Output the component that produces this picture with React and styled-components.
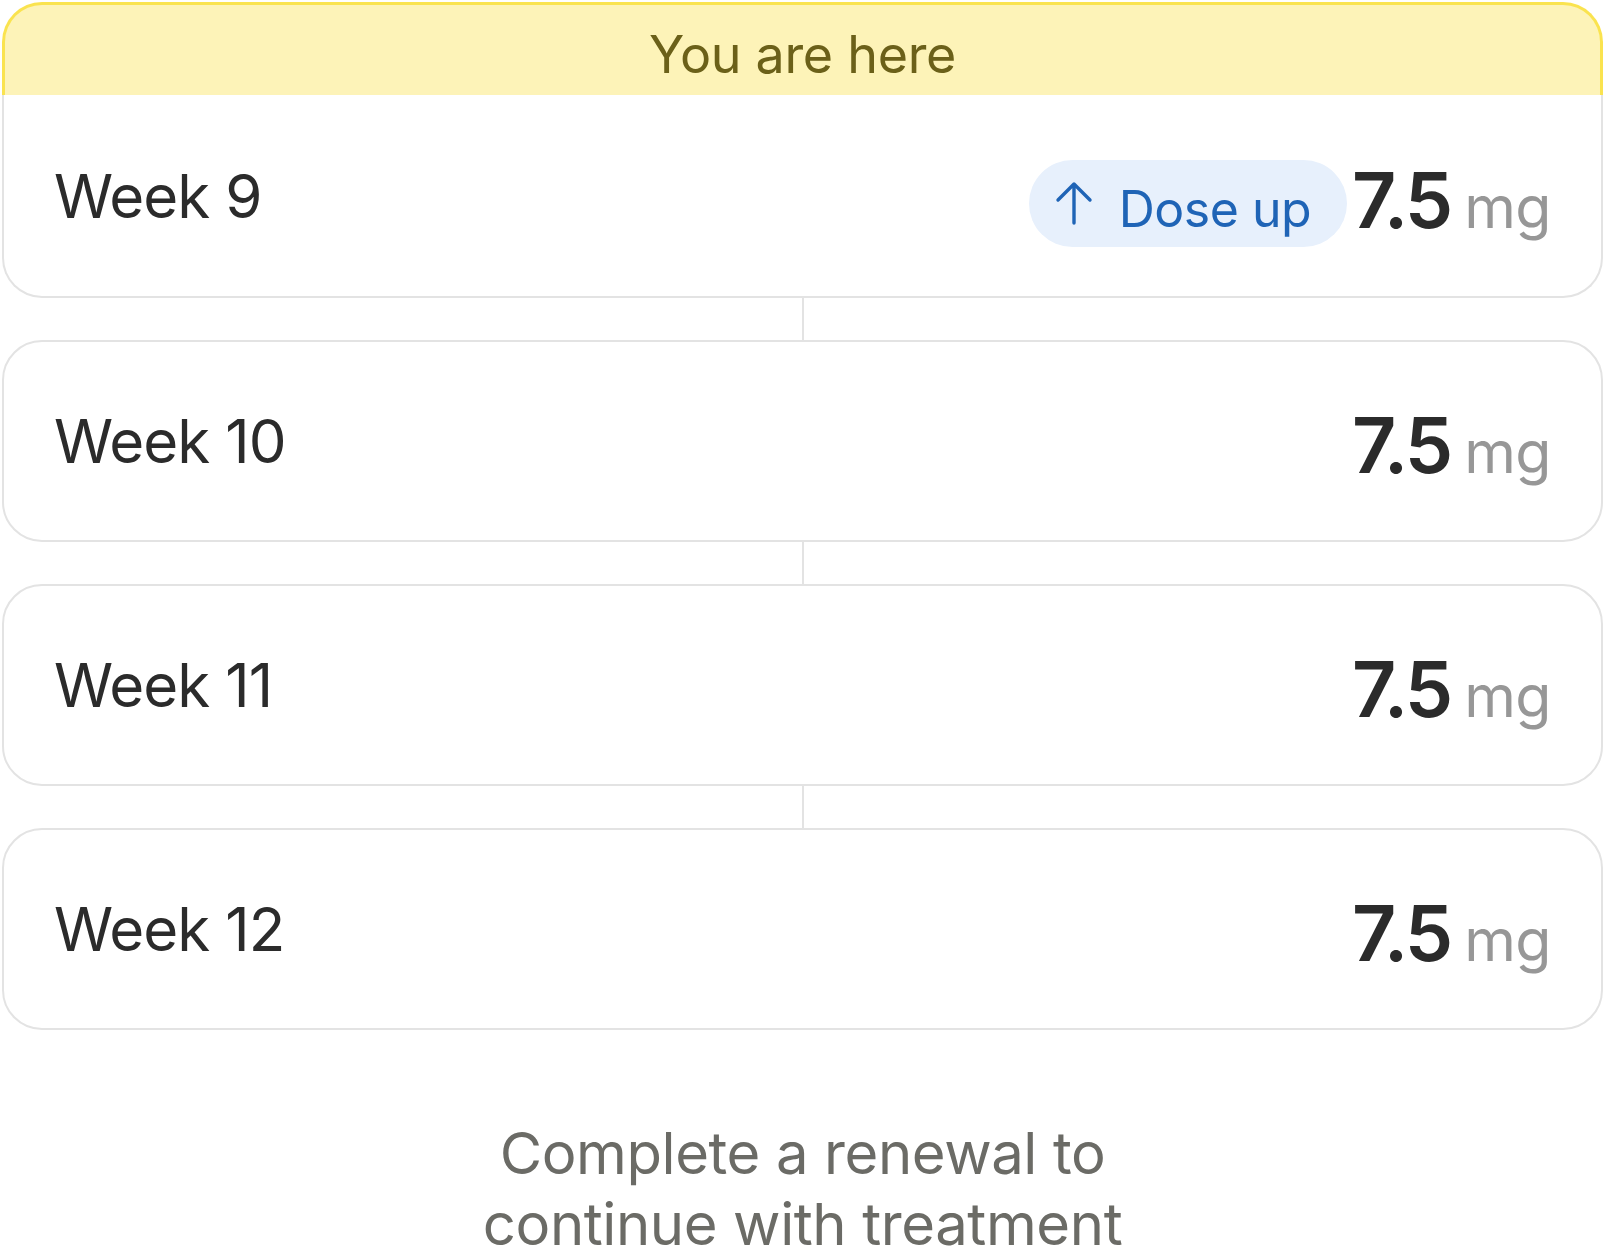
import React from 'react';
import styled, { createGlobalStyle } from 'styled-components';

const GlobalStyle = createGlobalStyle`
  html, body {
    margin: 0;
    padding: 0;
    background: #ffffff;
  }
  body {
    font-family: Inter, "Noto Sans", "Liberation Sans", sans-serif;
    color: #2b2b2b;
  }
`;

const Page = styled.div`
  width: 1605px;
  box-sizing: border-box;
  padding: 2px 2px 0 2px;
  display: flex;
  flex-direction: column;
`;

const Card = styled.div`
  display: flex;
  flex-direction: column;
`;

const Banner = styled.div`
  height: 93px;
  box-sizing: border-box;
  padding-top: 8px;
  display: flex;
  align-items: center;
  justify-content: center;
  background: #fdf3b8;
  border: 3px solid #fae34f;
  border-bottom: none;
  border-radius: 40px 40px 0 0;
  font-size: 52px;
  color: #6b6019;
  letter-spacing: -0.3px;
`;

const Row = styled.div`
  height: ${p => (p.$top ? 203 : 202)}px;
  box-sizing: border-box;
  display: flex;
  align-items: center;
  padding: 0 50px 0 50px;
  border: 2px solid #e3e3e3;
  border-top: ${p => (p.$top ? 'none' : '2px solid #e3e3e3')};
  border-radius: ${p => (p.$top ? '0 0 40px 40px' : '40px')};
  background: #ffffff;
`;

const WeekLabel = styled.div`
  flex: 1;
  font-size: 60px;
  letter-spacing: -0.9px;
  color: #2b2b2b;
`;

const Badge = styled.div`
  display: flex;
  align-items: center;
  gap: 26px;
  height: 87px;
  box-sizing: border-box;
  padding: 10px 36px 0 26px;
  margin: 16px 5px 0 0;
  border-radius: 44px;
  background: #e7f0fc;
  color: #1f64b6;
  font-size: 50px;
  letter-spacing: -0.5px;
`;

const ArrowBox = styled.span`
  display: flex;
  margin-top: -12px;
`;

const Dose = styled.div`
  display: flex;
  align-items: baseline;
  gap: 14px;
  padding-top: 8px;
`;

const Amount = styled.span`
  font-size: 77px;
  font-weight: 600;
  letter-spacing: -3px;
  color: #2b2b2b;
`;

const Unit = styled.span`
  font-size: 59px;
  color: #979797;
  letter-spacing: -0.5px;
`;

const Connector = styled.div`
  align-self: center;
  width: 2px;
  height: 42px;
  background: #e3e3e3;
`;

const Footer = styled.p`
  margin: 88px 0 0 0;
  text-align: center;
  font-size: 58px;
  line-height: 71px;
  color: #6b6b66;
  letter-spacing: -0.4px;
`;

const ArrowUp = () => (
  <svg width="38" height="44" viewBox="0 0 38 44" fill="none">
    <path d="M19 42 V3 M3 19 L19 3 L35 19" stroke="#1f64b6" strokeWidth="3.4" strokeLinecap="round" strokeLinejoin="round" />
  </svg>
);

const weeks = [
  { week: 9, amount: '7.5', doseUp: true },
  { week: 10, amount: '7.5' },
  { week: 11, amount: '7.5' },
  { week: 12, amount: '7.5' },
];

export default function App() {
  return (
    <>
      <GlobalStyle />
      <Page>
        {weeks.map((w, i) => (
          <React.Fragment key={w.week}>
            {i > 0 && <Connector />}
            <Card>
              {i === 0 && <Banner>You are here</Banner>}
              <Row $top={i === 0}>
                <WeekLabel>Week {w.week}</WeekLabel>
                {w.doseUp && (
                  <Badge>
                    <ArrowBox>
                      <ArrowUp />
                    </ArrowBox>
                    Dose up
                  </Badge>
                )}
                <Dose>
                  <Amount>{w.amount}</Amount>
                  <Unit>mg</Unit>
                </Dose>
              </Row>
            </Card>
          </React.Fragment>
        ))}
        <Footer>
          Complete a renewal to
          <br />
          continue with treatment
        </Footer>
      </Page>
    </>
  );
}
